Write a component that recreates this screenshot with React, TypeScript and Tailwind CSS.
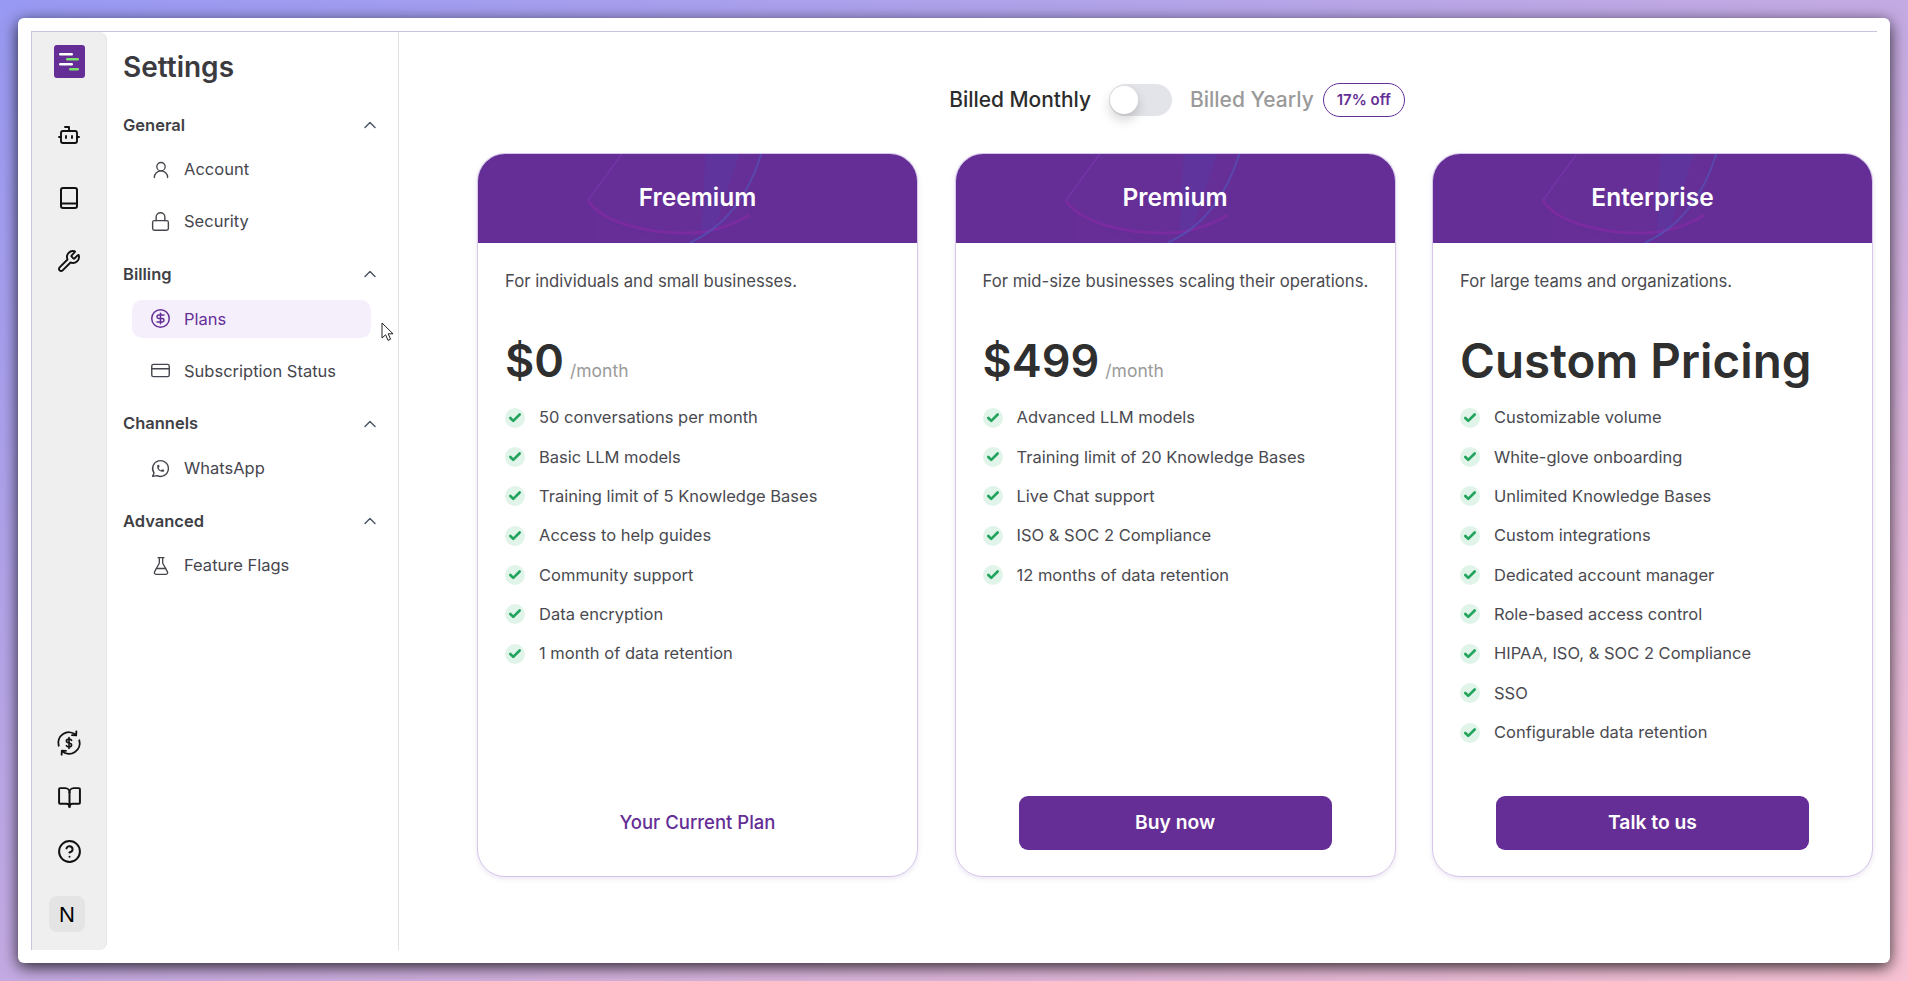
import {
  Bot,
  ChevronUp,
  CircleDollarSign,
  CircleHelp,
  Check,
  CreditCard,
  FlaskConical,
  BookOpen,
  Lock,
  UserRound,
  Wrench,
} from "lucide-react";
import { TbBrandWhatsapp } from "react-icons/tb";
import type { ReactNode } from "react";

type NavItem = { label: string; icon: ReactNode; active?: boolean };
type NavSection = { title: string; items: NavItem[] };
type Plan = {
  name: string;
  blurb: string;
  price: string;
  perMonth?: boolean;
  features: string[];
  cta: string;
  current?: boolean;
};

const sections: NavSection[] = [
  {
    title: "General",
    items: [
      { label: "Account", icon: <UserRound size={20} strokeWidth={1.6} /> },
      { label: "Security", icon: <Lock size={21} strokeWidth={1.6} /> },
    ],
  },
  {
    title: "Billing",
    items: [
      { label: "Plans", icon: <CircleDollarSign size={21} strokeWidth={1.7} />, active: true },
      { label: "Subscription Status", icon: <CreditCard size={21} strokeWidth={1.6} /> },
    ],
  },
  {
    title: "Channels",
    items: [{ label: "WhatsApp", icon: <TbBrandWhatsapp size={21} strokeWidth={1.6} /> }],
  },
  {
    title: "Advanced",
    items: [{ label: "Feature Flags", icon: <FlaskConical size={20} strokeWidth={1.6} /> }],
  },
];

const plans: Plan[] = [
  {
    name: "Freemium",
    blurb: "For individuals and small businesses.",
    price: "$0",
    perMonth: true,
    features: [
      "50 conversations per month",
      "Basic LLM models",
      "Training limit of 5 Knowledge Bases",
      "Access to help guides",
      "Community support",
      "Data encryption",
      "1 month of data retention",
    ],
    cta: "Your Current Plan",
    current: true,
  },
  {
    name: "Premium",
    blurb: "For mid-size businesses scaling their operations.",
    price: "$499",
    perMonth: true,
    features: [
      "Advanced LLM models",
      "Training limit of 20 Knowledge Bases",
      "Live Chat support",
      "ISO & SOC 2 Compliance",
      "12 months of data retention",
    ],
    cta: "Buy now",
  },
  {
    name: "Enterprise",
    blurb: "For large teams and organizations.",
    price: "Custom Pricing",
    features: [
      "Customizable volume",
      "White-glove onboarding",
      "Unlimited Knowledge Bases",
      "Custom integrations",
      "Dedicated account manager",
      "Role-based access control",
      "HIPAA, ISO, & SOC 2 Compliance",
      "SSO",
      "Configurable data retention",
    ],
    cta: "Talk to us",
  },
];

const Logo = () => (
  <svg width="31" height="33" viewBox="0 0 31 33">
    <rect width="31" height="33" rx="3" fill="#652e96" />
    <rect x="5" y="8" width="14" height="2.4" rx="1.2" fill="#fff" />
    <rect x="12" y="13" width="13" height="2.4" rx="1.2" fill="#7be26b" />
    <rect x="5" y="18" width="14" height="2.4" rx="1.2" fill="#fff" />
    <rect x="15" y="23" width="10" height="2.4" rx="1.2" fill="#7be26b" />
  </svg>
);

const BookIcon = () => (
  <svg width="24" height="24" viewBox="0 0 24 24" fill="none" stroke="#111" strokeWidth="2" strokeLinejoin="round">
    <rect x="4" y="2" width="16" height="20" rx="2" />
    <path d="M4 17.5h16" />
  </svg>
);

const RefreshDollarIcon = () => (
  <svg width="26" height="26" viewBox="0 0 24 24" fill="none" stroke="#111" strokeWidth="1.7" strokeLinecap="round" strokeLinejoin="round">
    <path d="M2.5 14.5A9.8 9.8 0 0 1 18 4.2" />
    <path d="M21.5 9.5A9.8 9.8 0 0 1 6 19.8" />
    <path d="M18.8 1.2 18.6 5 14.8 4.8" />
    <path d="M5.2 22.8 5.4 19 9.2 19.2" />
    <path d="M14.4 9.6c-.4-.8-1.2-1.2-2.4-1.2-1.4 0-2.4.7-2.4 1.8 0 2.5 4.8 1.2 4.8 3.7 0 1.1-1 1.8-2.4 1.8-1.2 0-2-.4-2.4-1.2M12 7v10" strokeWidth="1.5" />
  </svg>
);

// faint ribbon artwork behind the plan name
const HeaderWaves = () => (
  <svg className="absolute inset-0 h-full w-full blur-[0.7px]" viewBox="0 0 440 90" preserveAspectRatio="none" fill="none">
    <path d="M144 0 110 47C125 70 170 80 209 80 235 80 255 72 270 63L284 0Z" fill="#7a35a8" opacity="0.1" />
    <path d="M120 60C150 82 180 90 215 90H120Z" fill="#7a35a8" opacity="0.12" />
    <path d="M228 0 224 84 236 78 262 0Z" fill="#4a4fb0" opacity="0.22" />
    <path d="M144 0 110 47" stroke="#8a3fc0" strokeWidth="1.5" opacity="0.4" />
    <path d="M110 47C125 70 170 80 209 80 235 80 255 72 272 62" stroke="#8a2aa8" strokeWidth="3" opacity="0.55" />
    <path d="M284 0C270 45 245 75 212 90" stroke="#4f5cc0" strokeWidth="2" opacity="0.55" />
  </svg>
);

const Cursor = () => (
  <svg className="absolute left-[381px] top-[322px]" width="13" height="20" viewBox="0 0 13 20">
    <path d="M1 1V16L4.6 12.8 7 18.4 9.6 17.2 7.2 11.8H12Z" fill="#fff" stroke="#222" strokeWidth="1" strokeLinejoin="round" />
  </svg>
);

const IconRail = () => (
  <aside className="flex w-[75px] shrink-0 flex-col items-center rounded-r-lg border-r border-[#e4e4e4] bg-[#efefef] pt-[13px] pb-[18px] text-[#111]">
    <Logo />
    <div className="mt-[45px] flex flex-col items-center gap-[39px]">
      <Bot size={24} strokeWidth={1.9} />
      <BookIcon />
      <Wrench size={24} strokeWidth={1.9} />
    </div>
    <div className="mt-auto flex flex-col items-center gap-[29px]">
      <RefreshDollarIcon />
      <BookOpen size={25} strokeWidth={1.9} />
      <CircleHelp size={25} strokeWidth={1.9} />
    </div>
    <div className="mr-[4px] mt-[32px] flex h-[36px] w-[36px] items-center justify-center rounded-lg bg-[#e4e4e4] text-[22px] [font-family:'Liberation_Sans',sans-serif] text-black">
      N
    </div>
  </aside>
);

const SettingsNav = () => (
  <nav className="w-[292px] shrink-0 border-r border-[#e0e0e5] pl-[16px] pr-[18px] pt-[15px]">
    <h1 className="h-[40px] text-[28px] font-semibold leading-[40px] text-[#3a3a3f]">Settings</h1>
    <div className="mt-[26px] flex flex-col gap-[21.8px]">
      {sections.map((section) => (
        <section key={section.title}>
          <div className="mb-[13.6px] flex h-[24px] items-center justify-between">
            <span className="text-[16.5px] font-semibold text-[#3f3f46]">{section.title}</span>
            <ChevronUp size={20} strokeWidth={1.7} className="text-[#4b5563]" />
          </div>
          <ul className="flex flex-col gap-[14px]">
            {section.items.map((item) => (
              <li
                key={item.label}
                className={
                  item.active
                    ? "ml-[9px] mr-[9px] flex h-[38px] items-center rounded-[10px] bg-[#f5effc] pl-[18px] text-[#652e96]"
                    : "ml-[9px] mr-[9px] flex h-[38px] items-center pl-[18px] text-[#46464e]"
                }
              >
                <span className="flex w-[21px] justify-center">{item.icon}</span>
                <span className="ml-[13px] text-[16.5px] font-normal">{item.label}</span>
              </li>
            ))}
          </ul>
        </section>
      ))}
    </div>
  </nav>
);

const BillingToggle = () => (
  <div className="flex h-[34px] items-center justify-center">
    <span className="text-[20.9px] font-medium text-[#2c2c2c]">Billed Monthly</span>
    <div className="ml-[18px] flex h-[32px] w-[63px] items-center rounded-full bg-[#e2e4e9] pl-[1px]">
      <span className="h-[28px] w-[28px] rounded-full bg-white shadow-[0_6px_12px_rgba(0,0,0,0.18)]" />
    </div>
    <span className="ml-[18px] text-[21px] font-medium text-[#9a9a9a]">Billed Yearly</span>
    <span className="ml-[9px] flex h-[34px] w-[82px] items-center justify-center rounded-full border-[1.5px] border-[#652e96] text-[15px] font-semibold text-[#652e96]">
      17% off
    </span>
  </div>
);

const PlanCard = ({ plan }: { plan: Plan }) => (
  <article className="flex h-[724px] w-[441px] flex-col overflow-hidden rounded-[28px] border border-[#d6c6ea] bg-white shadow-[0_2px_5px_rgba(80,40,130,0.12)]">
    <header className="relative flex h-[89px] shrink-0 items-center justify-center bg-[#652e96] pb-[3px]">
      <HeaderWaves />
      <h2 className="relative text-[24.5px] font-semibold text-white">{plan.name}</h2>
    </header>
    <div className="flex flex-1 flex-col px-[27px] pb-[26px] pt-[26px]">
      <p className="h-[24px] whitespace-nowrap text-[16.7px] leading-[24px] text-[#4a4a50]">{plan.blurb}</p>
      <div className="mt-[38px] flex h-[60px] items-baseline">
        <span
          className={
            plan.perMonth
              ? "text-[45px] font-semibold leading-[60px] text-[#2f2f2f]"
              : "text-[47.5px] font-semibold leading-[60px] text-[#2f2f2f]"
          }
        >
          {plan.price}
        </span>
        {plan.perMonth && <span className="ml-[6px] text-[17.5px] text-[#9a9a9a]">/month</span>}
      </div>
      <ul className="mt-[14.5px] flex flex-col gap-[15.4px]">
        {plan.features.map((feature) => (
          <li key={feature} className="flex h-[24px] items-center">
            <span className="flex h-[20px] w-[20px] shrink-0 items-center justify-center rounded-full bg-[#e1f4e9]">
              <Check size={14} strokeWidth={4.5} className="text-[#22a45d]" />
            </span>
            <span className="ml-[14px] text-[16.5px] text-[#4a4a50]">{feature}</span>
          </li>
        ))}
      </ul>
      {plan.current ? (
        <div className="mx-auto mt-auto flex h-[54px] w-[313px] items-center justify-center text-[18.5px] font-medium text-[#652e96]">
          {plan.cta}
        </div>
      ) : (
        <button className="mx-auto mt-auto flex h-[54px] w-[313px] items-center justify-center rounded-[9px] bg-[#652e96] pb-[2px] text-[19.3px] font-semibold text-white">
          {plan.cta}
        </button>
      )}
    </div>
  </article>
);

export default function App() {
  return (
    <div className="relative h-[981px] w-full overflow-hidden bg-[linear-gradient(to_bottom_right,#9899f3_0%,#c4aae2_50%,#f8c2d4_100%)] p-[18px] [font-family:Inter,'Noto_Sans',sans-serif]">
      <div className="flex h-[945px] flex-col rounded-md bg-white px-[13px] pt-[13px] pb-[13px] shadow-[0_4px_16px_rgba(0,0,0,0.8)]">
        <div className="flex min-h-0 flex-1 border-l border-t border-[#c7c5dd]">
          <IconRail />
          <SettingsNav />
          <main className="flex-1 pl-[78px] pt-[51px]">
            <BillingToggle />
            <div className="mt-[36px] flex gap-[36.5px]">
              {plans.map((plan) => (
                <PlanCard key={plan.name} plan={plan} />
              ))}
            </div>
          </main>
        </div>
      </div>
      <Cursor />
    </div>
  );
}
